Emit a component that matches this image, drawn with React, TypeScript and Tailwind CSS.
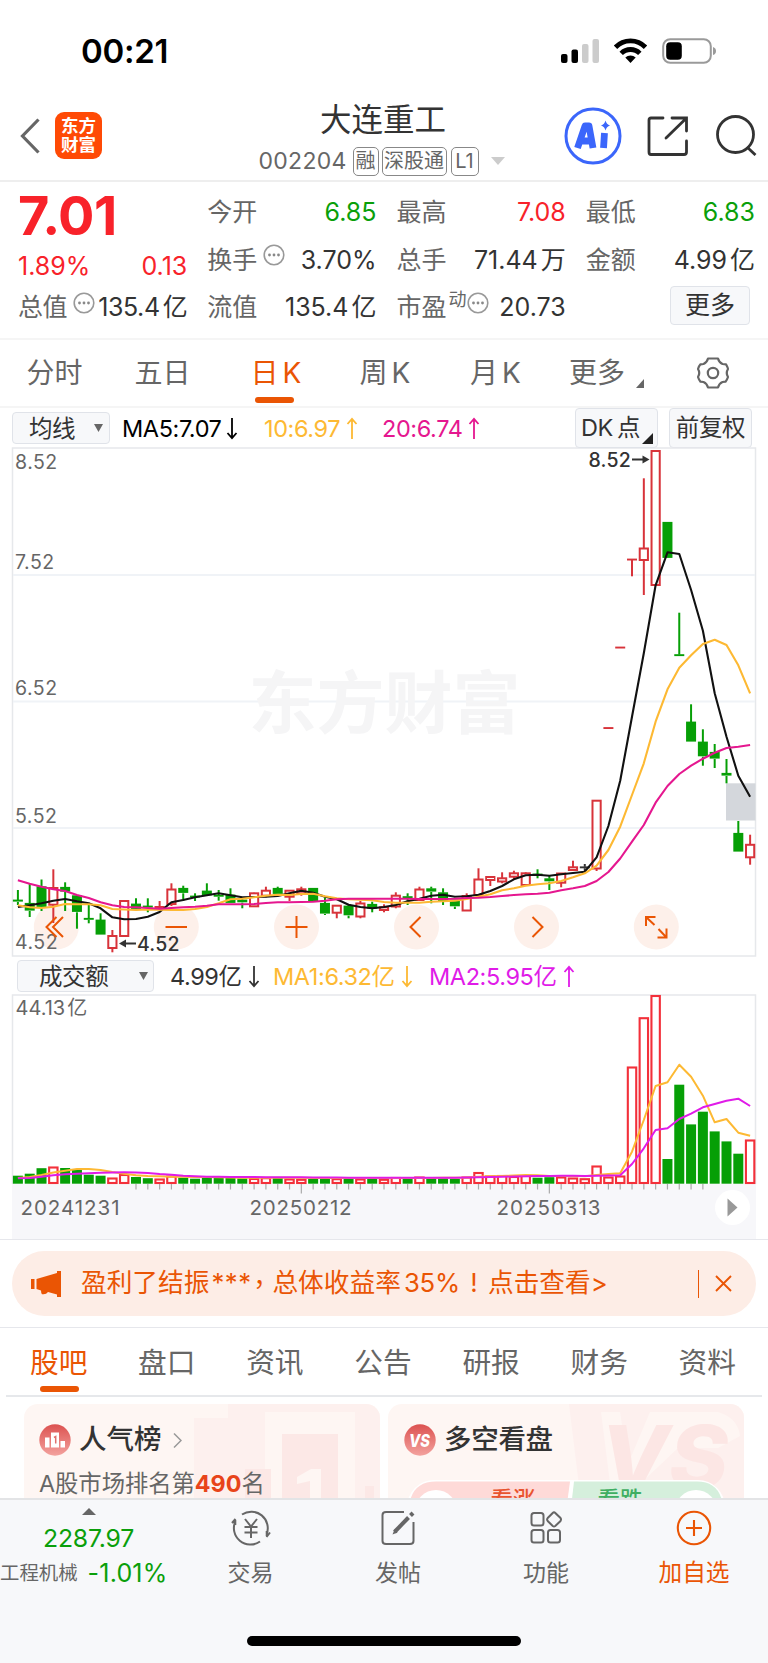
import React from 'react';

type Candle = [string, number, number, number, number];

// [colour, high, body top, body bottom, low] on the chart canvas
const candles: Candle[] = [
  ['g', 890, 900, 902, 905], ['g', 884, 903.3, 911, 917], ['g', 879.5, 886.7, 907.3, 911], ['r', 869.3, 888, 904.7, 923],
  ['g', 882.3, 887.3, 892, 911], ['g', 895, 895.7, 912.3, 928.7], ['g', 905, 918.3, 920, 923.3], ['g', 913.3, 920, 935, 935],
  ['r', 930, 936, 948, 952.3], ['r', 900, 901, 936, 936.7], ['g', 898.3, 904, 909.3, 911], ['g', 898.3, 906, 908, 912.3],
  ['r', 901, 907, 908.5, 910], ['r', 883.3, 889.5, 904, 906], ['g', 885.7, 888.3, 893.3, 900.7], ['g', 893.3, 896, 897.6, 901],
  ['g', 883.3, 891, 895.7, 896], ['g', 890, 895.2, 897, 900.7], ['g', 888.3, 895, 903.3, 903.3], ['g', 898, 900, 902.7, 908.3],
  ['r', 892.7, 893.3, 906.3, 907], ['r', 886.7, 890.7, 895.7, 897.3], ['g', 886.7, 888.3, 894.3, 894.3], ['r', 890, 890.7, 896.7, 901],
  ['r', 886.7, 889.3, 893.3, 895.7], ['g', 888.3, 888.3, 901.7, 901.7], ['g', 897.7, 903.3, 914, 915], ['r', 905, 905.7, 912.7, 918.3],
  ['g', 905, 906, 915.7, 918.3], ['r', 901, 903.5, 916.5, 918.3], ['g', 901.7, 904.3, 909, 912.3], ['r', 904.3, 907.3, 910, 912.3],
  ['r', 892.3, 895.7, 906.5, 908.3], ['g', 893.3, 896.6, 898, 905], ['r', 886.7, 889.5, 900, 900], ['g', 886.7, 888.7, 892, 903.3],
  ['g', 888.3, 892.7, 901.7, 905], ['g', 900, 900, 906.7, 909], ['r', 893.3, 896, 910.5, 911], ['r', 868.3, 879.5, 895, 895],
  ['r', 876.5, 877, 880, 886], ['r', 872.3, 878.3, 881.5, 883.3], ['r', 870.7, 873.3, 876.7, 879], ['r', 872.3, 873.3, 885, 885],
  ['g', 869.3, 874, 875.6, 878.3], ['g', 875.7, 878.7, 881.7, 890], ['r', 873, 873.5, 882.7, 887.3], ['r', 860.7, 867.3, 870, 870],
  ['k', 864, 866.8, 868.2, 871.7], ['r', 800, 800.7, 868.5, 871], ['r', 727.5, 727.5, 728.5, 728.5], ['r', 647, 647, 648, 648],
  ['r', 559, 559, 560, 576.3], ['r', 478.3, 548.5, 560, 595], ['r', 450.5, 451, 585, 585], ['g', 522.3, 522.3, 558.3, 558.3],
  ['g', 612.7, 654.6, 656, 656], ['g', 704.3, 722, 742, 742], ['g', 729.3, 742, 756.7, 765.7], ['g', 744, 752.3, 759, 768],
  ['g', 759, 773.3, 776, 783.3], ['g', 821, 833.3, 852, 852], ['r', 834.7, 844.8, 857.3, 864.7],
];

const ma5 = [
  907, 905.3, 903.3, 900.7, 899, 901.3, 903.3, 908.3, 917.3, 919.3, 919, 916.7, 912, 902.3, 900, 897.3, 895.3, 893.3, 895.3, 897.3, 897,
  896.7, 896, 893.3, 890.7, 892.7, 896.7, 899.3, 904.7, 907, 908.3, 907, 905, 901.3, 898.7, 895.7, 894.7, 896.7, 896.3, 894.7, 891,
  886, 879.3, 875.3, 874.7, 875.7, 874.3, 873, 871.7, 857.3, 826, 780.7, 716.7, 653.3, 585.3, 552.3, 554, 590, 630.7, 693.3, 736.7, 775.7, 796.7,
];
const ma10 = [
  905.3, 907.3, 908, 906.7, 904, 904.3, 904.3, 905.3, 909, 909.5, 910, 909.5, 909.7, 910, 910, 909, 907, 903.3, 899.3, 898.7, 897.3,
  895.7, 894.7, 895, 894, 893.7, 896.3, 898.3, 899.3, 899.7, 900.3, 902, 902.7, 902.7, 902.7, 901.7, 901.3, 900.7, 899, 896.7, 894.3,
  890.3, 888.3, 885.7, 884.3, 883.3, 881, 877.3, 873.3, 865.7, 850, 826.7, 795, 763.3, 721.7, 689.3, 667.7, 655.3, 644, 639.7, 645, 665.3, 693.3,
];
const ma20 = [
  880.3, 883.7, 886.7, 889.3, 891, 895, 898, 902.3, 905.3, 907, 907.3, 908, 908.7, 908, 907.3, 906.7, 905.7, 904.3, 904.3, 904.3, 904,
  903, 902.3, 902.3, 902, 901.7, 900.7, 899.3, 898.7, 898.7, 898.7, 898.7, 898.7, 898.8, 899, 899, 899, 898.7, 898, 897.7, 897,
  896, 895, 894.3, 893.7, 892.7, 890.3, 888.3, 886, 881, 872, 858.5, 841.7, 825, 802.7, 786, 774, 765.7, 758.7, 752.7, 748, 746.7, 745,
];

// top edge of every turnover bar
const volume = [
  1176, 1174, 1168.5, 1167, 1168.3, 1170, 1175, 1176, 1178, 1174.5, 1177.3, 1178.5, 1179, 1176, 1178, 1179, 1177.7, 1178, 1178, 1178.7, 1178.5,
  1177.7, 1177.7, 1179, 1179.3, 1179, 1179, 1178.7, 1179, 1179, 1179.3, 1179.3, 1177.5, 1178.5, 1177, 1177.5, 1178, 1179, 1177, 1172.5, 1176,
  1175.5, 1176.5, 1175.5, 1178, 1177.5, 1177, 1178, 1178.7, 1166, 1177, 1176, 1067, 1017.7, 995.5, 1159.3, 1085, 1124.7, 1112, 1131.7, 1141.7, 1154, 1140,
];
const volMa1 = [
  1178, 1177, 1175, 1172.5, 1170.7, 1169, 1169, 1170, 1172, 1173.7, 1175.3, 1176, 1176.3, 1176.7, 1176.7, 1177, 1177, 1177.2, 1177.5, 1177.7, 1177.7,
  1177.7, 1177.7, 1177.7, 1177.7, 1177.9, 1178, 1178, 1178, 1178, 1178, 1178, 1178, 1178, 1178, 1178, 1177.8, 1177.8, 1177.5, 1176.8, 1176.3,
  1176, 1175.5, 1175, 1175.2, 1176, 1176, 1176, 1176.3, 1175, 1174, 1173.3, 1151.7, 1120, 1086, 1082.3, 1064.7, 1076.7, 1095.7, 1122.3, 1119, 1132.7, 1135.7,
];
const volMa2 = [
  1178.3, 1178, 1176.7, 1175.3, 1174.3, 1173.7, 1173.3, 1172.7, 1172.4, 1172.3, 1172.4, 1173, 1174, 1174.7, 1175.7, 1176.3, 1176.7, 1176.8, 1177, 1177, 1177,
  1177.3, 1177.3, 1177.3, 1177.3, 1177.5, 1177.5, 1177.5, 1177.7, 1177.7, 1177.7, 1177.8, 1177.8, 1177.8, 1177.8, 1177.8, 1177.8, 1177.8, 1177.5, 1177.2, 1177,
  1176.8, 1176.5, 1176.2, 1176, 1176, 1175.8, 1175.8, 1176, 1175.7, 1175.5, 1175.3, 1164, 1148.3, 1130, 1128.3, 1119, 1113.7, 1107.3, 1104, 1100.7, 1098.7, 1106,
];

const colors: Record<string, string> = { r: '#d8333a', g: '#069f06', k: '#333333' };
const xAt = (i: number) => 17.9 + i * 11.81;
const toPoints = (ys: number[]) => ys.map((y, i) => `${xAt(i).toFixed(1)},${y}`).join(' ');

const StatusBar = () => (
  <div className="h-[97px] flex items-start justify-between pl-[81px] pr-[52px] pt-[31px]">
    <span className="text-[33px] leading-[40px] font-semibold text-black tracking-[-0.3px]">00:21</span>
    <svg width="155" height="26" viewBox="0 0 155 26" className="mt-[7px]">
      <rect x="0" y="16" width="6.500" height="9" rx="2" />
      <rect x="10.500" y="11.500" width="6.500" height="13.500" rx="2" />
      <rect x="21" y="6" width="6.500" height="19" rx="2" fill="#cccccc" />
      <rect x="31.500" y="1" width="6.500" height="24" rx="2" fill="#cccccc" />
      <g fill="none" stroke="#000" strokeWidth="4.800">
        <path d="M54.500 9.200 A21 21 0 0 1 84.500 9.200" />
        <path d="M60.200 15.400 A13 13 0 0 1 78.800 15.400" />
      </g>
      <path d="M69.500 25 l-5.200-5.400 a7.600 7.600 0 0 1 10.400 0z" />
      <rect x="102.200" y="1.200" width="47.600" height="23.600" rx="7" fill="none" stroke="#9a9a9a" strokeWidth="2" />
      <rect x="105.200" y="4.200" width="15.600" height="17.600" rx="4" />
      <path d="M152 9 q3 1 3 4 t-3 4z" fill="#9a9a9a" />
    </svg>
  </div>
);

const Header = () => (
  <header className="h-[85px] flex justify-between border-b-2 border-[#eeeeee]">
    <div className="flex w-[240px] pl-5 pt-[15px]">
      <svg width="20" height="36" viewBox="0 0 20 36" className="mt-[6px]">
        <path d="M18.500 1.500 L2.500 18 L18.500 34.500" fill="none" stroke="#666" strokeWidth="3.200" />
      </svg>
      <div className="ml-[15px] w-[47px] h-[47px] rounded-[9px] bg-[#ff4a05] text-white text-[17.500px] leading-[19px] font-bold text-center pt-[4px]">
        <div>东方</div>
        <div>财富</div>
      </div>
    </div>
    <div className="flex flex-col items-center pt-[4px]">
      <h1 className="text-[31.500px] leading-[38px] text-[#333] mr-[2px]">大连重工</h1>
      <div className="flex items-center text-[20px] text-[#666] h-[30px] mt-[7px] ml-[-5px]">
        <span className="text-[23px] tracking-[0.3px] w-[94px]">002204</span>
        <span className="border-[1.500px] border-[#888] rounded-[5px] w-[26px] h-[29px] leading-[26px] text-center">融</span>
        <span className="border-[1.500px] border-[#888] rounded-[5px] w-[65px] h-[29px] leading-[26px] text-center ml-[3px]">深股通</span>
        <span className="border-[1.500px] border-[#888] rounded-[5px] w-[28px] h-[29px] leading-[26px] text-center ml-[4px]">L1</span>
        <svg width="14" height="8" viewBox="0 0 14 8" className="ml-[12px]">
          <path d="M0 0H14L7 8z" fill="#cccccc" />
        </svg>
      </div>
    </div>
    <div className="flex w-[240px] justify-end pr-[11px] pt-[10px]">
      <svg width="58" height="58" viewBox="0 0 58 58">
        <circle cx="29" cy="29" r="27" fill="none" stroke="#3b66fb" strokeWidth="3" />
        <g fill="none" stroke="#3b66fb" strokeWidth="6.800" strokeLinejoin="round">
          <path d="M13.500 41 L21 19 H25 L29 41 M18 34 H27" />
          <path d="M40.500 26 L39.500 41" />
        </g>
        <path d="M41.500 13.500 q1 4 4.500 5 q-3.500 1 -4.500 5 q-1-4-4.500-5 q3.500-1 4.500-5z" fill="#3b66fb" />
      </svg>
      <svg width="42" height="42" viewBox="0 0 42 42" className="ml-[25px] mt-[8px]" fill="none" stroke="#333" strokeWidth="2.800" strokeLinecap="round">
        <path d="M16 3 H4 Q2 3 2 5 V37 Q2 39.500 4 39.500 H37 Q39.500 39.500 39.500 37 V26" />
        <path d="M25 3 H39.500 V16 M39 3.500 L19 23" />
      </svg>
      <svg width="42" height="42" viewBox="0 0 42 42" className="ml-[26px] mt-[7px]" fill="none" stroke="#333" strokeWidth="2.800">
        <circle cx="20.500" cy="20.500" r="18" />
        <path d="M32 33 L40.500 41" />
      </svg>
    </div>
  </header>
);

const Dots = ({ className = '' }: { className?: string }) => (
  <svg width="22" height="22" viewBox="0 0 22 22" className={className}>
    <circle cx="11" cy="11" r="9.800" fill="none" stroke="#999" strokeWidth="1.600" />
    <circle cx="6.500" cy="11" r="1.400" fill="#888" />
    <circle cx="11" cy="11" r="1.400" fill="#888" />
    <circle cx="15.500" cy="11" r="1.400" fill="#888" />
  </svg>
);

interface StatProps {
  label: string;
  value: string;
  unit?: string;
  color?: string;
  info?: boolean;
  sup?: string;
}

const Stat = ({ label, value, unit, color = 'text-[#333]', info, sup }: StatProps) => (
  <div className="h-[47.500px] flex items-center justify-between whitespace-nowrap">
    <div className="flex items-center text-[25px] text-[#666]">
      {label}
      {sup && <span className="text-[18px] mb-4 ml-0.5">{sup}</span>}
      {info && <Dots className={sup ? 'mb-2.5' : 'mb-2.5 ml-[6px]'} />}
    </div>
    <div className={`text-[25px] ${color}`}>
      {value}
      {unit && <span className="ml-[3px]">{unit}</span>}
    </div>
  </div>
);

const Quote = () => (
  <section className="h-[158px] pt-[7px] pl-[18px] pr-[13px] grid grid-cols-4 gap-x-5 border-b-2 border-[#f5f5f5]">
    <div>
      <div className="h-[61px] text-[54px] leading-[54px] font-bold text-[#f8222a] tracking-[-0.500px]">7.01</div>
      <div className="h-[34px] flex items-center justify-between text-[25px] text-[#f8222a]">
        <span>1.89%</span>
        <span>0.13</span>
      </div>
      <div className="tracking-[-0.4px]">
        <Stat label="总值" value="135.4" unit="亿" info />
      </div>
    </div>
    <div>
      <Stat label="今开" value="6.85" color="text-[#0a9f0a]" />
      <Stat label="换手" value="3.70%" info />
      <Stat label="流值" value="135.4" unit="亿" />
    </div>
    <div>
      <Stat label="最高" value="7.08" color="text-[#f8222a]" />
      <Stat label="总手" value="71.44" unit="万" />
      <Stat label="市盈" value="20.73" sup="动" info />
    </div>
    <div>
      <Stat label="最低" value="6.83" color="text-[#0a9f0a]" />
      <Stat label="金额" value="4.99" unit="亿" />
      <button className="block ml-auto mr-[5px] mt-[2px] w-[80px] h-[39px] rounded border-[1.500px] border-[#e0e3e9] bg-[#f7f8fa] text-[25px] leading-[35px] text-[#333]">更多</button>
    </div>
  </section>
);

const PeriodTabs = () => (
  <nav className="h-[68px] flex text-[28px] text-[#666] text-center leading-[67px] border-b-2 border-[#f5f5f5]">
    <div className="w-[109px]">分时</div>
    <div className="w-[107px]">五日</div>
    <div className="w-[120px] text-[#ea5504] relative">
      日<span className="ml-1">K</span>
      <i className="absolute left-[39px] top-[57px] w-[39px] h-[6px] rounded-full bg-[#ea5504]" />
    </div>
    <div className="w-[98px]">周<span className="ml-1">K</span></div>
    <div className="w-[123px]">月<span className="ml-1">K</span></div>
    <div className="w-[100px] pl-[12px] flex items-center">
      更多
      <svg width="8" height="9" viewBox="0 0 8 9" className="ml-[11px] mt-[20px]">
        <path d="M8 0V9H0z" fill="#666" />
      </svg>
    </div>
    <svg width="34" height="34" viewBox="0 0 34 34" className="ml-[39px] mt-[16px]" fill="none" stroke="#666" strokeWidth="2.200" strokeLinejoin="round">
      <path d="M12 2.500 H22 Q23 6.500 26.500 8 L30 8.300 Q32 12 32 13 Q29.500 17 32 21 Q31 24 29.500 25.700 L26.500 26 Q23 27.500 22 31.500 H12 Q11 27.500 7.500 26 L4.500 25.700 Q3 24 2 21 Q4.500 17 2 13 Q3 10 4.500 8.300 L7.500 8 Q11 6.500 12 2.500z" />
      <circle cx="17" cy="17" r="5.200" />
    </svg>
  </nav>
);

const Arrow = ({ up, className = '' }: { up?: boolean; className?: string }) => (
  <svg width="12" height="23" viewBox="0 0 12 23" className={className} fill="none" stroke="currentColor" strokeWidth="1.800">
    <path d={up ? 'M6 22V2M1.500 7L6 1.800L10.500 7' : 'M6 1V21M1.500 16L6 21.200L10.500 16'} />
  </svg>
);

const Caret = ({ className = '' }: { className?: string }) => (
  <svg width="9" height="8" viewBox="0 0 9 8" className={className}>
    <path d="M0 0H9L4.500 8z" fill="#666" />
  </svg>
);

const MaRow = () => (
  <div className="h-[39px] flex items-start pl-3 text-[23.500px] tracking-[-0.4px] whitespace-nowrap leading-[31px]">
    <div className="mt-[4px] w-[98px] h-[32px] shrink-0 flex items-center justify-between pl-[16px] pr-[6px] rounded border-[1.500px] border-[#e0e3e9] bg-[#f7f8fa] text-[#333]">
      均线
      <Caret />
    </div>
    <div className="mt-[5px] ml-3 w-[142px] flex items-center text-black">MA5:7.07<Arrow className="ml-1" /></div>
    <div className="mt-[5px] w-[118px] flex items-center text-[#fdb933]">10:6.97<Arrow up className="ml-1.5" /></div>
    <div className="mt-[5px] w-[193px] flex items-center text-[#e5178f]">20:6.74<Arrow up className="ml-1.5" /></div>
    <div className="relative w-[83px] h-[40px] pl-[5px] leading-[38px] shrink-0 rounded border-[1.500px] border-[#e0e3e9] bg-[#f7f8fa] text-[#333]">
      DK<span className="ml-1">点</span>
      <svg width="11" height="11" viewBox="0 0 11 11" className="absolute right-[4px] bottom-[3px]">
        <path d="M11 0V11H0z" fill="#222" />
      </svg>
    </div>
    <div className="ml-[11px] w-[83px] h-[40px] leading-[38px] text-center shrink-0 rounded border-[1.500px] border-[#e0e3e9] bg-[#f7f8fa] text-[#333]">前复权</div>
  </div>
);

const KChart = () => (
  <svg width="768" height="510" viewBox="0 447 768 510">
    <rect x="12.500" y="448" width="743" height="508" fill="none" stroke="#e6e8eb" strokeWidth="1.500" />
    {[575, 701.6, 828].map((y) => (
      <path key={y} d={`M13 ${y}H755`} stroke="#f0f3f7" strokeWidth="2" />
    ))}
    <text x="384.500" y="728" textAnchor="middle" fontSize="68" fontWeight="700" fill="#f5f5f6">东方财富</text>
    <rect x="726" y="783.300" width="29.500" height="37.200" fill="#d4d7dc" />

    {[56.300, 176.300, 296.500, 416.500, 536.500, 656.300].map((x) => (
      <circle key={x} cx={x} cy="927" r="22.500" fill="#fdf0ea" />
    ))}

    <g fontSize="19.500" letterSpacing="0.5" fill="#666">
      <text x="15" y="469">8.52</text>
      <text x="15" y="568.500">7.52</text>
      <text x="15" y="695">6.52</text>
      <text x="15" y="822.500">5.52</text>
      <text x="15" y="949">4.52</text>
    </g>

    {candles.map(([kind, high, top, bottom, low], i) => {
      const x = xAt(i);
      const color = colors[kind];
      return (
        <g key={i} stroke={color} strokeWidth="2">
          {top > high && <path d={`M${x} ${high}V${top}`} />}
          {low > bottom && <path d={`M${x} ${bottom}V${low}`} />}
          {kind !== 'r' || bottom - top < 1.2 ? (
            <rect x={x - 5} y={top - 0.400} width="10" height={Math.max(bottom - top, 1.900)} fill={color} stroke="none" />
          ) : (
            <rect x={x - 4.100} y={top} width="8.200" height={bottom - top} fill="#fff" fillOpacity="0.600" />
          )}
        </g>
      );
    })}

    <g fill="none" strokeWidth="2.100" strokeLinejoin="round">
      <polyline points={toPoints(ma5)} stroke="#111" />
      <polyline points={toPoints(ma10)} stroke="#fdb933" />
      <polyline points={toPoints(ma20)} stroke="#e5178f" />
    </g>

    {/* high and low marks */}
    <g fill="#333" fontSize="19.500" fontWeight="500" letterSpacing="0.2">
      <text x="137" y="951">4.52</text>
      <text x="588.500" y="467">8.52</text>
      <path d="M125 943.500H136M632 459.500H643" stroke="#333" strokeWidth="2" />
      <path d="M119 943.500l7-4v8zM649.500 459.500l-7-4v8z" />
    </g>

    <g fill="none" stroke="#ea5504" strokeWidth="2">
      <path d="M56.500 917L46.500 927L56.500 937M63 917L53 927L63 937" />
      <path d="M165.500 927H187" />
      <path d="M285.500 927H307.500M296.500 916V938" />
      <path d="M420.500 917L410.500 927L420.500 937" />
      <path d="M532.500 917L542.500 927L532.500 937" />
      <path d="M646 926V917H655.500M646 917L654.500 925M657.500 937.500H666.500V928.500M666.500 937.500L658.500 929" />
    </g>
  </svg>
);

const VolumeRow = () => (
  <div className="h-[37px] flex items-start pl-[17px] text-[23.500px] tracking-[-0.4px] whitespace-nowrap leading-[31px]">
    <div className="mt-[3px] w-[137px] h-[32px] shrink-0 flex items-center justify-between pl-[21px] pr-[5px] rounded border-[1.500px] border-[#e0e3e9] bg-[#f7f8fa] text-[#333]">
      成交额
      <Caret />
    </div>
    <div className="mt-[4px] ml-4 w-[103px] flex items-center text-[#333]">4.99亿<Arrow className="ml-1.5" /></div>
    <div className="mt-[4px] w-[156px] flex items-center text-[#fdb933]">MA1:6.32亿<Arrow className="ml-1.5" /></div>
    <div className="mt-[4px] flex items-center text-[#e01be8]">MA2:5.95亿<Arrow up className="ml-1.5" /></div>
  </div>
);

const VolumeChart = () => (
  <svg width="768" height="245" viewBox="0 994 768 245">
    <rect x="12" y="1184" width="744" height="55" fill="#f7f7fa" />
    <path d="M12.500 1184V995H755.500V1184" fill="none" stroke="#e6e8eb" strokeWidth="1.500" />
    <text x="15.500" y="1014.500" fontSize="20" fill="#666">44.13<tspan dx="2">亿</tspan></text>
    {volume.map((top, i) => {
      const x = xAt(i);
      return candles[i][0] === 'g' ? (
        <rect key={i} x={x - 5} y={top - 0.300} width="10" height={1184 - top} fill="#069f06" />
      ) : (
        <rect key={i} x={x - 4.200} y={top + 0.500} width="8.400" height={1182.500 - top} fill="#fff" stroke="#f3303a" strokeWidth="2.100" />
      );
    })}
    <g fill="none" strokeWidth="2" strokeLinejoin="round">
      <polyline points={toPoints(volMa1)} stroke="#fdb933" />
      <polyline points={toPoints(volMa2)} stroke="#e01be8" />
    </g>
    {volume.slice(10, 59).map((_, n) => {
      const i = n + 10;
      return <path key={i} d={`M${xAt(i)} 1184V${i === 24 || i === 45 ? 1193.500 : 1189.500}`} stroke="#aaa" strokeWidth="1.200" />;
    })}
    <g fontSize="20.500" fill="#666">
      <text x="20.500" y="1214.500" textLength="99">20241231</text>
      <text x="249.500" y="1214.500" textLength="102">20250212</text>
      <text x="496.500" y="1214.500" textLength="104">20250313</text>
    </g>
    <circle cx="732.500" cy="1207.500" r="17.500" fill="#fff" />
    <path d="M727.500 1198.500V1216.500L737.500 1207.500z" fill="#999" />
  </svg>
);

const Notice = () => (
  <div className="h-[89px] border-y-[1.500px] border-[#e6e7ec] pt-[11px] px-3">
    <div className="h-[65px] rounded-full bg-[#fdede6] text-[#ea5504] text-[25.700px] flex items-center pl-[19px] pr-[24px] whitespace-nowrap">
      <svg width="30" height="26" viewBox="0 0 30 26" fill="#ea5504">
        <path d="M0 8H3.500V18H0zM5.500 8L26 2V0H30V26H26V23.500L17 21Q15 24 11 23.200Q10 22 10 19.500L5.500 18z" />
      </svg>
      <span className="ml-[20px]">盈利了结振</span>
      <span className="w-[37px] pl-[2px] tracking-[0.5px]">***</span>
      <span className="w-[26px] font-['Noto_Sans_CJK_TC',sans-serif]">，</span>
      <span>总体收益率<span className="ml-[3px] tracking-[-0.2px]">35%</span></span>
      <span className="w-[28px] text-center">!</span>
      <span>点击查看&gt;</span>
      <i className="ml-auto w-[1.500px] h-[28px] bg-[#ea5504]" />
      <svg width="17" height="17" viewBox="0 0 17 17" className="ml-[16px]" stroke="#ea5504" strokeWidth="1.900">
        <path d="M1 1L16 16M16 1L1 16" />
      </svg>
    </div>
  </div>
);

const InfoTabs = () => (
  <nav className="relative mx-[6px] h-[69px] flex justify-between pl-[24px] pr-[26px] text-[28.700px] leading-[70px] text-[#666] border-b-2 border-[#e6e8eb]">
    {['股吧', '盘口', '资讯', '公告', '研报', '财务', '资料'].map((tab, i) => (
      <div key={tab} className={i === 0 ? 'text-[#ea5504]' : ''}>{tab}</div>
    ))}
    <i className="absolute left-[34px] top-[58px] w-[39px] h-[6px] rounded-full bg-[#ea5504]" />
  </nav>
);

const Cards = () => (
  <div className="h-[101px] overflow-hidden pt-[7px] px-6 flex gap-2">
    <div className="relative w-[356px] h-[130px] rounded-[14px] bg-[#fef6f3] overflow-hidden">
      <svg width="356" height="130" viewBox="0 0 356 130" className="absolute inset-0">
        <path d="M204 0H356V130H170V50H170V14H204z" fill="#fdf0ee" />
        <path d="M241 8H331V130H241z" fill="#fef6f3" />
        <path d="M258 30H314V130H258zM221 65H247V130H221zM341 82H350V130H341z" fill="#fce8e6" />
        <path d="M273 73L287 65H297V130H286V77L273 80z" fill="#fef6f3" />
      </svg>
      <div className="relative pl-[15px] pt-[16px]">
        <div className="flex items-center h-[40px] text-[27.500px] font-medium text-[#333]">
          <svg width="32" height="32" viewBox="0 0 32 32">
            <defs>
              <linearGradient id="badge" x1="0" y1="0" x2="0" y2="1">
                <stop offset="0" stopColor="#dc5250" />
                <stop offset="1" stopColor="#f3a29e" />
              </linearGradient>
            </defs>
            <circle cx="16" cy="16" r="15.700" fill="url(#badge)" />
            <path d="M6 13.500H10.500V23.500H6zM12 8.500H20V23.500H12zM21.500 17H26V23.500H21.500z" fill="#fff" />
            <path d="M15 13.500L16.700 12.500V19.500" fill="none" stroke="#e0706c" strokeWidth="1.500" />
          </svg>
          <span className="ml-[8px]">人气榜</span>
          <svg width="9" height="15" viewBox="0 0 9 15" className="ml-[11px]" fill="none" stroke="#999" strokeWidth="1.500">
            <path d="M1 0.500L8 7.500L1 14.500" />
          </svg>
        </div>
        <div className="mt-[8px] text-[23.300px] leading-[32px] text-[#666] whitespace-nowrap">
          A股市场排名第<span className="font-bold text-[#e8441a]">490</span>名
        </div>
      </div>
    </div>

    <div className="relative w-[356px] h-[130px] rounded-[14px] bg-[#fef6f3] overflow-hidden">
      <svg width="356" height="130" viewBox="0 0 356 130" className="absolute inset-0">
        <path d="M181 0H356V130H197z" fill="#fdf0ee" />
        <path d="M213 8H232L240 60L262 8H330Q350 14 352 32L330 44H290L252 80H222z" fill="#fef6f3" />
        <text x="212" y="84" fontSize="86" fontWeight="800" fontStyle="italic" fill="#fce6e4" textLength="128" lengthAdjust="spacingAndGlyphs">VS</text>
      </svg>
      <div className="relative pl-4 pt-[16px]">
        <div className="flex items-center h-[40px] text-[27.500px] font-medium text-[#333]">
          <svg width="32" height="32" viewBox="0 0 32 32">
            <circle cx="16" cy="16" r="15.700" fill="url(#badge)" />
            <text x="15.500" y="22.500" textAnchor="middle" fontSize="18" fontWeight="800" fontStyle="italic" textLength="21" lengthAdjust="spacingAndGlyphs" fill="#fff">VS</text>
          </svg>
          <span className="ml-[8px] tracking-[-0.3px]">多空看盘</span>
        </div>
      </div>
      <svg width="356" height="54" viewBox="0 0 356 54" className="absolute left-0 top-[76px]">
        <rect x="19" y="0" width="318" height="60" rx="27" fill="#fff" />
        <path d="M48 1.500H182L175 54H21V28Q23 1.500 48 1.500z" fill="#fedad8" />
        <path d="M186 1.500H309Q333 1.500 335 28V54H180z" fill="#d5efdc" />
        <circle cx="48" cy="31" r="21" fill="#fff" />
        <circle cx="308" cy="31" r="21" fill="#fff" />
        <text x="125" y="28" textAnchor="middle" fontSize="22.500" fontWeight="500" fill="#e8532f">看涨</text>
        <text x="232" y="28" textAnchor="middle" fontSize="22.500" fontWeight="500" fill="#3fae62">看跌</text>
      </svg>
    </div>
  </div>
);

const BottomBar = () => (
  <footer className="h-[165px] bg-[#f7f8fa] border-t-[2.500px] border-[#e3e4e6] flex flex-col">
    <div className="flex h-[100px] text-[23px] text-[#666] whitespace-nowrap">
      <div className="w-[177px] pt-[8px] flex flex-col items-center">
        <svg width="14" height="7" viewBox="0 0 14 7">
          <path d="M7 0L14 7H0z" fill="#666" />
        </svg>
        <div className="mt-[6px] text-[24.800px] leading-[34px] text-[#0a9f0a] tracking-[-0.2px]">2287.97</div>
        <div className="flex items-center w-full leading-[34px] mt-px">
          <span className="text-[19.400px]">工程机械</span>
          <span className="ml-[10px] text-[25px] tracking-[0.2px] text-[#0a9f0a]">-1.01%</span>
        </div>
      </div>
      <div className="w-[147px] pt-[10px] flex flex-col items-center">
        <svg width="40" height="36" viewBox="0 0 40 36" fill="none" stroke="#666" strokeWidth="2">
          <path d="M11 4.500A16.500 16.500 0 0 1 35.500 24.500M35.500 27L39 22.500M35.700 26V21" />
          <path d="M29 31.500A16.500 16.500 0 0 1 4.500 11M4.500 9L1 13M4.300 10V15" />
          <path d="M14 9L20 16.500L26 9M20 16.500V28M13.500 17H26.500M13.500 22.500H26.500" />
        </svg>
        <span className="mt-[10px] leading-[34px]">交易</span>
      </div>
      <div className="w-[148px] pt-[10px] flex flex-col items-center">
        <svg width="34" height="36" viewBox="0 0 34 36" fill="none" stroke="#666" strokeWidth="2">
          <path d="M23 2H5Q1.500 2 1.500 5V31Q1.500 34 5 34H29Q32.500 34 32.500 31V12" />
          <path d="M13.500 22L27.500 7.500" strokeWidth="4" />
          <path d="M11.500 24.500L13.500 19.500L16.500 22.500z" fill="#666" stroke="none" />
          <path d="M29.500 5.500L32 3" strokeWidth="4" />
        </svg>
        <span className="mt-[10px] leading-[34px]">发帖</span>
      </div>
      <div className="w-[148px] pt-[10px] flex flex-col items-center">
        <svg width="32" height="36" viewBox="0 0 32 36" fill="none" stroke="#666" strokeWidth="2">
          <rect x="1.500" y="3" width="12" height="12.500" rx="2.500" />
          <rect x="1.500" y="20" width="12" height="12.500" rx="2.500" />
          <rect x="18" y="20" width="12" height="12.500" rx="2.500" />
          <path d="M22.700 3Q24 1.700 25.300 3L30.500 8Q31.500 9.500 30.500 11L25.300 16Q24 17 22.700 16L17.700 11Q16.500 9.500 17.700 8z" />
        </svg>
        <span className="mt-[10px] leading-[34px]">功能</span>
      </div>
      <div className="w-[148px] pt-[10px] flex flex-col items-center text-[#ea5504]">
        <svg width="36" height="36" viewBox="0 0 36 36" fill="none" stroke="#ea5504" strokeWidth="2.100">
          <circle cx="18" cy="18" r="16.200" />
          <path d="M10 18H26M18 10V26" />
        </svg>
        <span className="mt-[10px] leading-[34px] text-[23.700px]">加自选</span>
      </div>
    </div>
    <div className="mt-[36px] mx-auto w-[274px] h-[10px] rounded-full bg-black" />
  </footer>
);

const App: React.FC = () => {
  return (
    <div className="w-[768px] h-[1663px] overflow-hidden bg-white flex flex-col font-['Inter','Noto_Sans_CJK_SC',sans-serif]">
      <StatusBar />
      <Header />
      <Quote />
      <PeriodTabs />
      <MaRow />
      <KChart />
      <VolumeRow />
      <VolumeChart />
      <Notice />
      <InfoTabs />
      <Cards />
      <BottomBar />
    </div>
  );
};

export default App;
